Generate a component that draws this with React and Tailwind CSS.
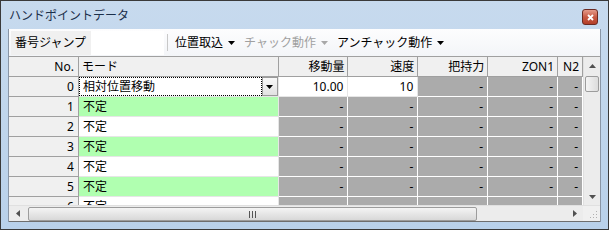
import React from 'react';

const FONT = { fontFamily: '"Noto Sans", "Noto Sans CJK JP", sans-serif' };

const COLS = [
  { key: 'amount', label: '移動量', w: 'w-[70px]' },
  { key: 'speed', label: '速度', w: 'w-[70px]' },
  { key: 'grip', label: '把持力', w: 'w-[70px]' },
  { key: 'zon1', label: 'ZON1', w: 'w-[70px]' },
  { key: 'n2', label: 'N2', w: 'w-[25px]' },
];

const ROWS = [0, 1, 2, 3, 4, 5, 6];

const Caret = ({ className = '' }) => (
  <svg width="7" height="4" viewBox="0 0 7 4" className={className}>
    <path d="M0 0h7L3.5 4z" fill="currentColor" />
  </svg>
);

const ToolItem = ({ label, disabled }) => (
  <div className={`flex items-center gap-[5px] ${disabled ? 'text-[#a0a0a0]' : 'text-black'}`}>
    <span>{label}</span>
    <Caret className={disabled ? 'text-[#a8a8a8]' : 'text-black'} />
  </div>
);

const TitleBar = () => (
  <div className="h-[29px] flex items-center justify-between pl-[8px] pr-[10px]">
    <span className="text-[12px] text-[#1b2f4a] leading-none pt-[2px]">ハンドポイントデータ</span>
    <div className="w-[16px] h-[16px] mt-[4px] rounded-[3px] border border-[#6b2a22] bg-gradient-to-b from-[#e49a8a] via-[#c85a44] to-[#b33e28] flex items-center justify-center">
      <svg width="7" height="7" viewBox="0 0 7 7">
        <path d="M1 1l5 5M6 1L1 6" stroke="#fff" strokeWidth="1.8" />
      </svg>
    </div>
  </div>
);

const Toolbar = () => (
  <div className="h-[28px] flex items-center bg-gradient-to-b from-[#fdfdfe] to-[#f3f5f8] border-b border-[#a0a0a0] text-[12px] leading-none">
    <div className="ml-[2px] h-[24px] w-[80px] bg-[#f0f0f0] flex items-center pl-[4px]">番号ジャンプ</div>
    <div className="h-[24px] w-[73px] bg-white" />
    <div className="ml-[3px] w-px h-[17px] bg-[#c8c8c8]" />
    <div className="ml-[7px] flex items-center gap-[9px]">
      <ToolItem label="位置取込" />
      <ToolItem label="チャック動作" disabled />
      <ToolItem label="アンチャック動作" />
    </div>
  </div>
);

const HeaderRow = () => (
  <div className="flex h-[20px] bg-[#f0f0f0]">
    <div className="w-[70px] border-r border-b border-[#a0a0a0] flex items-center justify-end pr-[4px]">No.</div>
    <div className="w-[200px] border-r border-b border-[#a0a0a0] flex items-center pl-[3px]">モード</div>
    {COLS.map(c => (
      <div key={c.key} className={`${c.w} border-r border-b border-[#a0a0a0] flex items-center justify-end pr-[3px]`}>{c.label}</div>
    ))}
  </div>
);

const DataRow = ({ n }) => {
  const first = n === 0;
  const green = n % 2 === 1;
  return (
    <div className="flex h-[20px]">
      <div className="w-[70px] bg-[#f0f0f0] border-r border-b border-[#a0a0a0] flex items-center justify-end pr-[4px]">{n}</div>
      {first ? (
        <div className="w-[200px] bg-white border-r border-b border-[#e6e6e6] flex items-stretch">
          <div className="flex-1 border border-dotted border-black flex items-center pl-[3px]">相対位置移動</div>
          <div className="w-[16px] bg-gradient-to-b from-[#f8f8f8] to-[#e2e2e2] border border-[#9a9a9a] flex items-center justify-center">
            <Caret />
          </div>
        </div>
      ) : (
        <div className={`w-[200px] ${green ? 'bg-[#b0ffb0]' : 'bg-white'} border-r border-b border-[#e6e6e6] flex items-center pl-[4px]`}>不定</div>
      )}
      {COLS.map(c => {
        const white = first && (c.key === 'amount' || c.key === 'speed');
        const val = first && c.key === 'amount' ? '10.00' : first && c.key === 'speed' ? '10' : '-';
        return (
          <div
            key={c.key}
            className={`${c.w} ${white ? 'bg-white border-[#e6e6e6]' : 'bg-[#ababab] border-white'} border-r border-b flex items-center justify-end pr-[4px]`}
          >
            {val}
          </div>
        );
      })}
    </div>
  );
};

const VScroll = () => (
  <div className="w-[17px] bg-[#ececec] border-l border-[#e0e0e0] flex flex-col items-center">
    <div className="h-[17px] w-full flex items-center justify-center">
      <svg width="7" height="4" viewBox="0 0 7 4"><path d="M0 4h7L3.5 0z" fill="#505050" /></svg>
    </div>
    <div className="mt-[2px] w-[14px] h-[16px] rounded-[2px] border border-[#9c9c9c] bg-gradient-to-r from-[#f4f4f4] to-[#dcdcdc]" />
    <div className="flex-1" />
    <div className="h-[17px] w-full flex items-center justify-center">
      <svg width="7" height="4" viewBox="0 0 7 4"><path d="M0 0h7L3.5 4z" fill="#505050" /></svg>
    </div>
  </div>
);

const HScroll = () => (
  <div className="h-[16px] flex bg-[#ececec] border-t border-[#e0e0e0]">
    <div className="w-[17px] flex items-center justify-center">
      <svg width="4" height="7" viewBox="0 0 4 7"><path d="M4 0v7L0 3.5z" fill="#505050" /></svg>
    </div>
    <div className="ml-[2px] w-[449px] h-[14px] mt-px rounded-[2px] border border-[#9c9c9c] bg-gradient-to-b from-[#f4f4f4] to-[#d8d8d8] flex items-center justify-center">
      <div className="flex gap-[1px]">
        <span className="w-px h-[7px] bg-[#555]" />
        <span className="w-px h-[7px] bg-[#555] ml-px" />
        <span className="w-px h-[7px] bg-[#555] ml-px" />
      </div>
    </div>
    <div className="flex-1 flex items-center justify-end pr-[6px]">
      <svg width="4" height="7" viewBox="0 0 4 7"><path d="M0 0v7L4 3.5z" fill="#505050" /></svg>
    </div>
    <div className="w-[17px] bg-[#f0f0f0] flex items-end justify-end p-[2px]">
      <svg width="8" height="8" viewBox="0 0 8 8">
        <g fill="#b0b0b0">
          <rect x="6" y="0" width="1" height="1" />
          <rect x="3" y="3" width="1" height="1" /><rect x="6" y="3" width="1" height="1" />
          <rect x="0" y="6" width="1" height="1" /><rect x="3" y="6" width="1" height="1" /><rect x="6" y="6" width="1" height="1" />
        </g>
      </svg>
    </div>
  </div>
);

export default function App() {
  return (
    <div style={FONT} className="w-[609px] h-[230px] border border-[#3a3a3a] bg-gradient-to-b from-[#c7daee] to-[#b9d1ea] flex flex-col overflow-hidden">
      <TitleBar />
      <div className="mx-[7px] flex-1 flex flex-col bg-[#f0f0f0] border-l border-r border-[#8a96a6]">
        <Toolbar />
        <div className="flex-1 flex flex-col border-b border-[#6e6e6e]">
          <div className="flex h-[148px]">
            <div className="w-[575px] overflow-hidden text-[12px] leading-none text-black">
              <HeaderRow />
              {ROWS.map(n => <DataRow key={n} n={n} />)}
            </div>
            <VScroll />
          </div>
          <HScroll />
        </div>
      </div>
      <div className="h-[7px]" />
    </div>
  );
}
